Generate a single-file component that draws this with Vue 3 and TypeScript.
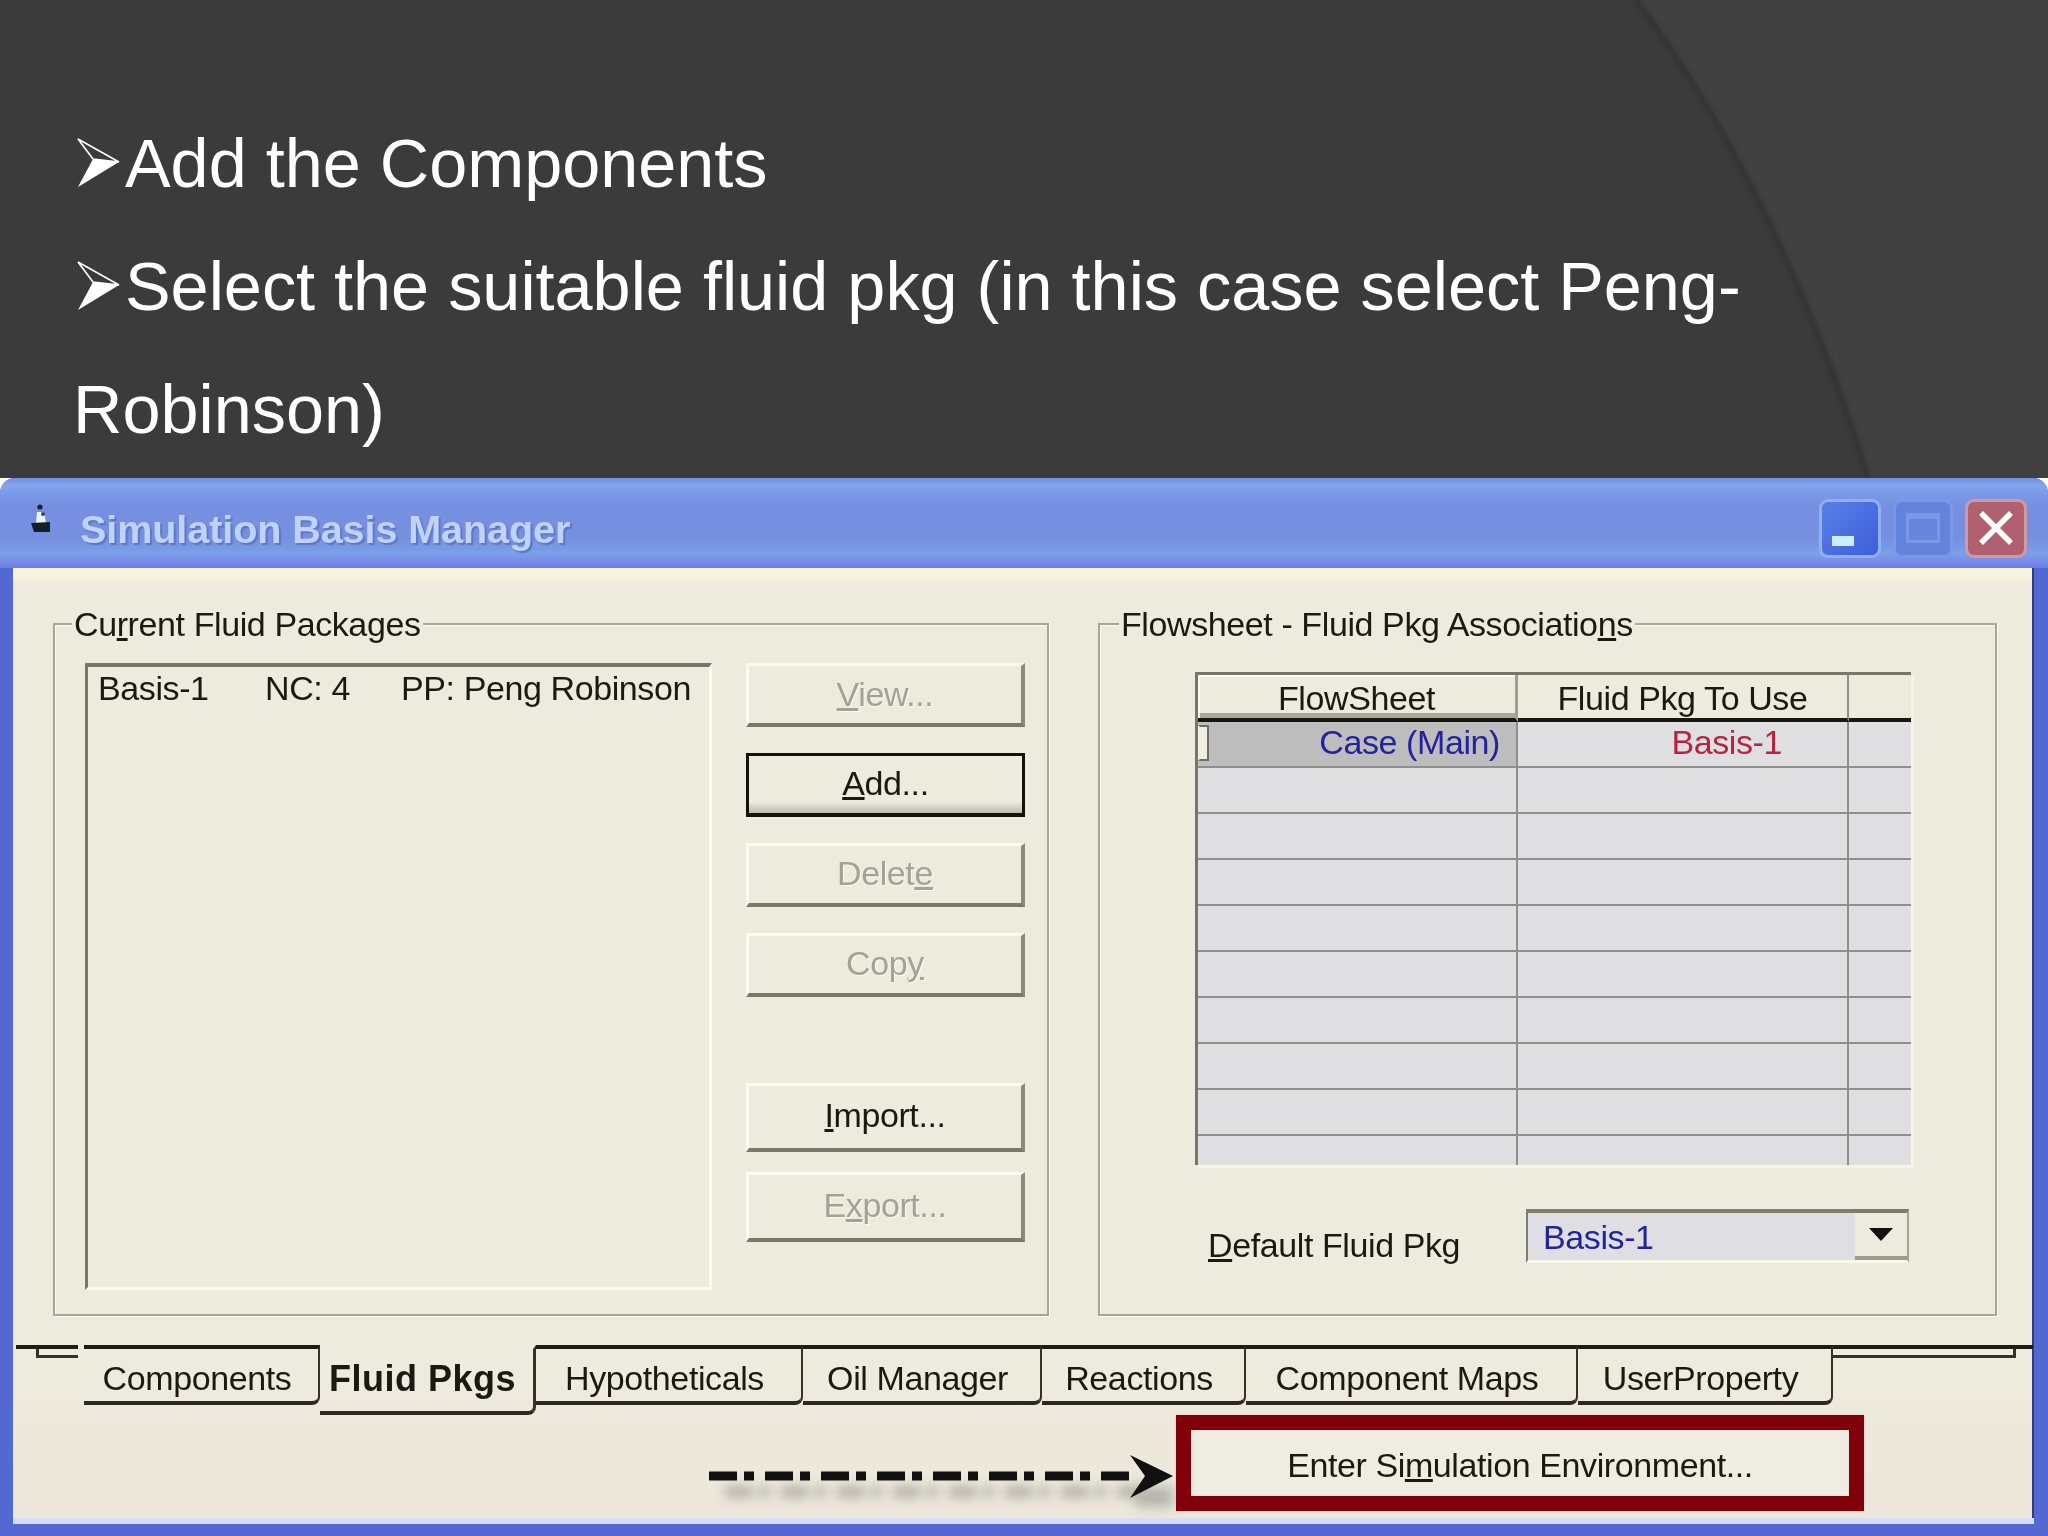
<script setup lang="ts">
interface Tab { label: string; width: number; selected?: boolean }
const tabs: Tab[] = [
  { label: 'Components', width: 236 },
  { label: 'Fluid Pkgs', width: 216, selected: true },
  { label: 'Hypotheticals', width: 267 },
  { label: 'Oil Manager', width: 239 },
  { label: 'Reactions', width: 204 },
  { label: 'Component Maps', width: 332 },
  { label: 'UserProperty', width: 255 },
]
const emptyRows = [1, 2, 3, 4, 5, 6, 7, 8, 9]
</script>

<template>
  <div class="slide">
    <svg class="swoosh" viewBox="0 0 2048 478" width="2048" height="478" aria-hidden="true">
      <path d="M1638 0 Q1780 190 1870 478 L2048 478 L2048 0 Z" fill="#414141" />
      <path class="swoosh-edge" d="M1636 0 Q1778 190 1868 478" />
    </svg>

    <div class="bullets">
      <p>
        <svg class="bullet" viewBox="0 0 52 52" aria-hidden="true">
          <path d="M5 3 L46 26 L20 23 Z" fill="none" stroke="#fff" stroke-width="1.6" />
          <path d="M46 26 L5 51 L20 23 Z" fill="#fff" />
        </svg>Add the Components
      </p>
      <p>
        <svg class="bullet" viewBox="0 0 52 52" aria-hidden="true">
          <path d="M5 3 L46 26 L20 23 Z" fill="none" stroke="#fff" stroke-width="1.6" />
          <path d="M46 26 L5 51 L20 23 Z" fill="#fff" />
        </svg>Select the suitable fluid pkg (in this case select Peng-<br />Robinson)
      </p>
    </div>

    <div class="window">
      <div class="frame">
        <header class="titlebar">
          <svg class="app-icon" viewBox="0 0 20 30" aria-hidden="true">
            <circle cx="9" cy="4" r="2.6" fill="#1d2430" />
            <path d="M6 9 L13 9 L15 20 L5 20 Z" fill="#eef1f8" />
            <circle cx="12" cy="11" r="2" fill="#39414f" />
            <path d="M0 20 L19 19 L19 29 L3 29 Z" fill="#12202a" />
          </svg>
          <span class="title">Simulation Basis Manager</span>
          <div class="controls">
            <div class="ctl ctl-min"><span class="min-glyph"></span></div>
            <div class="ctl ctl-max"><span class="max-glyph"></span></div>
            <div class="ctl ctl-close">
              <svg viewBox="0 0 40 40" width="40" height="40" aria-hidden="true">
                <path d="M5 5 L35 35 M35 5 L5 35" stroke="#fff" stroke-width="5.5" />
              </svg>
            </div>
          </div>
        </header>

        <div class="client">
          <div class="groups">
            <section class="group group-a">
              <span class="legend">Cu<u>r</u>rent Fluid Packages</span>
              <div class="listbox">
                <div class="list-row">
                  <span>Basis-1</span><span>NC: 4</span><span>PP: Peng Robinson</span>
                </div>
              </div>
              <div class="btns">
                <button class="btn off"><u>V</u>iew...</button>
                <button class="btn default"><u>A</u>dd...</button>
                <button class="btn off">Delet<u>e</u></button>
                <button class="btn off">Cop<u>y</u></button>
                <button class="btn tall lower"><u>I</u>mport...</button>
                <button class="btn off tall">E<u>x</u>port...</button>
              </div>
            </section>

            <section class="group group-b">
              <span class="legend legend-b">Flowsheet - Fluid Pkg Associatio<u>n</u>s</span>
              <div class="grid">
                <div class="gcell ghead ghead-raised">FlowSheet</div>
                <div class="gcell ghead">Fluid Pkg To Use</div>
                <div class="gcell ghead gend"></div>

                <div class="gcell first"><span class="marker"></span><span class="blue">Case (Main)</span></div>
                <div class="gcell second"><span class="red">Basis-1</span></div>
                <div class="gcell gend"></div>

                <template v-for="r in emptyRows" :key="r">
                  <div class="gcell" :class="{ last: r === 9 }"></div>
                  <div class="gcell" :class="{ last: r === 9 }"></div>
                  <div class="gcell gend" :class="{ last: r === 9 }"></div>
                </template>
              </div>
              <div class="default-row">
                <label class="default-label"><u>D</u>efault Fluid Pkg</label>
                <div class="combo">
                  <span class="combo-text">Basis-1</span>
                  <span class="combo-btn"><i class="tri"></i></span>
                </div>
              </div>
            </section>
          </div>

          <nav class="tabs">
            <div class="tab-fill tab-fill-left"></div>
            <div
              v-for="t in tabs"
              :key="t.label"
              class="tab"
              :class="{ selected: t.selected }"
              :style="{ width: t.width + 'px' }"
            >{{ t.label }}</div>
            <div class="tab-fill tab-fill-right"></div>
          </nav>

          <div class="footer">
            <svg class="arrow" viewBox="0 0 465 97" width="465" height="97" aria-hidden="true">
              <path class="arrow-shadow" d="M14 77 H440" />
              <path class="head-shadow" d="M425 72 L462 72 L462 92 L425 92 Z" />
              <path class="arrow-line" d="M-2 61 H420" />
              <path d="M419 40 L462 61 L419 83 L434 61 Z" fill="#111" />
            </svg>
            <div class="enter-box">
              <div class="enter">Enter Si<u>m</u>ulation Environment...</div>
            </div>
          </div>
        </div>
      </div>
    </div>
  </div>
</template>

<style>
html, body { margin: 0; background: #3b3b3b; }
</style>

<style scoped>
.slide {
  position: relative;
  width: 2048px;
  height: 1536px;
  overflow: hidden;
  display: flex;
  flex-direction: column;
  background: #3b3b3b;
  font-family: "Liberation Sans", Arial, sans-serif;
}
.swoosh { position: absolute; left: 0; top: 0; }
.swoosh-edge {
  fill: none;
  stroke: #343434;
  stroke-width: 6;
  filter: blur(2px);
}

.bullets {
  position: relative;
  height: 478px;
  box-sizing: border-box;
  padding: 102px 0 0 73px;
  color: #fff;
  font-size: 68.4px;
  line-height: 123px;
}
.bullets p { margin: 0; white-space: nowrap; }
.bullet {
  display: inline-block;
  width: 52px;
  height: 52px;
  vertical-align: -1px;
}

.window {
  flex: 1;
  background: #fff;
  display: flex;
  min-height: 0;
}
.frame {
  flex: 1;
  display: flex;
  flex-direction: column;
  border-radius: 15px 15px 0 0;
  overflow: hidden;
  background: #5468d2;
  padding: 0 14px 12px 13px;
  filter: blur(0.6px);
}

.titlebar {
  height: 90px;
  margin: 0 -14px 0 -13px;
  display: flex;
  align-items: center;
  background: linear-gradient(#7590e0 0, #84a6ee 9%, #7b99e8 16%, #768fe0 32%, #7690e0 68%, #7aa0e8 84%, #7a8ae8 93%, #6a80e4 100%);
}
.app-icon { width: 20px; height: 30px; margin: -10px 0 0 31px; }
.title {
  margin-left: 29px;
  margin-top: 12px;
  font-size: 39.6px;
  font-weight: 700;
  color: #c0d2f6;
  text-shadow: 2px 2px 1px #5d76c8;
  letter-spacing: -0.1px;
}
.controls {
  margin-left: auto;
  margin-right: 21px;
  display: flex;
  gap: 12px;
  margin-top: 10px;
}
.ctl {
  width: 62px;
  height: 59px;
  box-sizing: border-box;
  border: 3px solid #8fb0f5;
  border-radius: 9px;
  position: relative;
  display: flex;
  align-items: center;
  justify-content: center;
}
.ctl-min { background: linear-gradient(135deg, #5b7fe6, #3c5fd8); }
.ctl-max { background: #6483dc; border-color: #7a98e8; width: 60px; }
.ctl-close { background: #b0606e; border-color: #cf9aa8; }
.min-glyph {
  position: absolute;
  left: 10px;
  bottom: 9px;
  width: 22px;
  height: 10px;
  background: #c8f0ff;
}
.max-glyph {
  width: 34px;
  height: 30px;
  box-sizing: border-box;
  border: 3px solid #7a98e8;
  border-top-width: 6px;
  background: #6585de;
}

.client {
  flex: 1;
  display: flex;
  flex-direction: column;
  color: #1a1a12;
  font-size: 34px;
  line-height: 40px;
  letter-spacing: -0.4px;
  background: linear-gradient(#f6f4df 0, #f6f4df 10px, #edeade 14px, #edeade 85%, #ece7da 100%);
  border-bottom: 6px solid #d8dcfa;
  box-shadow: inset -2px 0 0 #2e3c88;
}

.groups {
  margin: 55px 0 0 40px;
  display: flex;
  gap: 49px;
}
.group {
  position: relative;
  box-sizing: border-box;
  height: 693px;
  border: 2px solid #a6a596;
  box-shadow: inset 1px 1px 0 #fbfaf0, 1px 1px 0 #fbfaf0;
}
.group-a {
  width: 996px;
  display: flex;
  padding: 38px 0 0 30px;
  gap: 34px;
}
.group-b {
  width: 899px;
  padding: 47px 0 0 95px;
}
.legend {
  position: absolute;
  left: 17px;
  top: -21px;
  padding: 0 2px;
  background: #edeade;
  white-space: nowrap;
}
.legend-b { left: 19px; }

.listbox {
  box-sizing: border-box;
  width: 627px;
  height: 627px;
  border-top: 4px solid #77766a;
  border-left: 3px solid #77766a;
  border-right: 3px solid #fbfaee;
  border-bottom: 3px solid #fbfaee;
  padding: 1px 0 0 10px;
}
.list-row {
  display: grid;
  grid-template-columns: 167px 136px auto;
  white-space: nowrap;
}

.btns { display: flex; flex-direction: column; width: 279px; gap: 26px; }
.btn {
  box-sizing: border-box;
  height: 64px;
  padding: 0 0 4px;
  margin: 0;
  font: inherit;
  letter-spacing: inherit;
  line-height: 40px;
  color: #1a1a12;
  background: #edeade;
  border: 0;
  border-top: 3px solid #fbfaf0;
  border-left: 3px solid #fbfaf0;
  border-right: 4px solid #8b8a7a;
  border-bottom: 4px solid #7a7868;
}
.btn:first-child { padding-bottom: 1px; }
.btn.off { color: #a3a296; text-shadow: 1px 1px 0 #fbfaf0; }
.btn.default {
  border: 3px solid #12120c;
  border-bottom-width: 4px;
  background: linear-gradient(#edeade 80%, #bdbbae 100%);
}
.btn.tall { height: 69px; }
.btn.lower { margin-top: 60px; }
.btn.off.tall { height: 70px; margin-top: -6px; }

.grid {
  box-sizing: border-box;
  width: 716px;
  height: 493px;
  display: grid;
  grid-template-columns: 320px 331px 62px;
  grid-template-rows: 47px repeat(9, 46px) 29px;
  border-top: 3px solid #77766a;
  border-left: 3px solid #77766a;
  box-shadow: 3px 3px 0 #f6f5e8;
  background: #dfdfe1;
  overflow: hidden;
}
.gcell {
  box-sizing: border-box;
  position: relative;
  background: #dfdfe1;
  border-right: 2px solid #8e8e8a;
  border-bottom: 2px solid #8e8e8a;
}
.gcell.gend { border-right: 0; }
.gcell.last { border-bottom: 0; }
.ghead {
  background: #edeade;
  border-bottom: 4px solid #17170f;
  text-align: center;
  padding-top: 3px;
  white-space: nowrap;
}
.ghead-raised {
  border-right: 3px solid #a09f90;
  box-shadow: inset 2px 2px 0 #fbfaf0, inset 0 -5px 0 #a9a89a;
}
.first {
  background: #bdbdbd;
  text-align: right;
  padding-right: 16px;
  white-space: nowrap;
}
.second {
  text-align: right;
  padding-right: 65px;
  white-space: nowrap;
}
.blue { color: #23239c; }
.red { color: #b8243e; }
.marker {
  position: absolute;
  left: 0;
  top: 3px;
  width: 11px;
  height: 36px;
  box-sizing: border-box;
  background: #f0eee2;
  border: 2px solid #6e6e64;
  border-left-color: #f0eee2;
}

.default-row {
  display: flex;
  margin-top: 44px;
  margin-left: 13px;
}
.default-label { width: 318px; padding-top: 16px; white-space: nowrap; }
.combo {
  box-sizing: border-box;
  width: 383px;
  height: 54px;
  display: flex;
  justify-content: space-between;
  background: #dfdfe3;
  border-top: 4px solid #7d7d6c;
  border-left: 2px solid #7d7d6c;
  border-right: 2px solid #a5a595;
  border-bottom: 3px solid #f8f7ea;
}
.combo-text { color: #23239c; padding: 0 0 0 15px; margin-top: 4px; }
.combo-btn {
  width: 52px;
  box-sizing: border-box;
  background: #edeade;
  border-bottom: 4px solid #9c9b8c;
  display: flex;
  align-items: center;
  justify-content: center;
}
.tri {
  width: 0;
  height: 0;
  border-left: 12px solid transparent;
  border-right: 12px solid transparent;
  border-top: 13px solid #111;
}

.tabs {
  margin: 29px 0 0 3px;
  height: 70px;
  display: flex;
  align-items: flex-start;
}
.tab-fill {
  position: relative;
  box-sizing: border-box;
  height: 4px;
  background: #1d1d15;
}
.tab-fill-left { width: 62px; margin-right: 6px; }
.tab-fill-left::after {
  content: "";
  position: absolute;
  left: 20px;
  top: 4px;
  width: 42px;
  height: 9px;
  box-sizing: border-box;
  border-left: 3px solid #33332a;
  border-bottom: 3px solid #33332a;
}
.tab-fill-right { width: 200px; }
.tab-fill-right::after {
  content: "";
  position: absolute;
  left: 0;
  top: 4px;
  width: 183px;
  height: 9px;
  box-sizing: border-box;
  border-right: 3px solid #33332a;
  border-bottom: 3px solid #33332a;
}
.tab {
  box-sizing: border-box;
  height: 60px;
  padding: 9px 8px 0 0;
  text-align: center;
  white-space: nowrap;
  border-top: 4px solid #1d1d15;
  border-right: 2px solid #33332a;
  border-bottom: 4px solid #2a2a20;
  border-bottom-right-radius: 8px;
}
.tab:first-of-type { border-right-color: transparent; }
.tab.selected {
  height: 70px;
  padding-top: 10px;
  font-size: 36px;
  font-weight: 700;
  letter-spacing: 0.5px;
  border-top-color: transparent;
  border-right-width: 3px;
}

.footer {
  display: flex;
  margin-left: 698px;
  height: 103px;
  align-items: flex-start;
}
.arrow { flex: none; overflow: visible; }
.arrow-line {
  fill: none;
  stroke: #111;
  stroke-width: 9;
  stroke-dasharray: 28 7 10 11;
}
.arrow-shadow {
  fill: none;
  stroke: #a9a9a2;
  stroke-width: 10;
  stroke-dasharray: 28 7 10 11;
  filter: blur(6px);
}
.head-shadow {
  fill: #b4b4ac;
  filter: blur(6px);
}
.enter-box {
  box-sizing: border-box;
  width: 688px;
  height: 96px;
  border: 15px solid #80000a;
  background: #efece2;
  box-shadow: 0 0 2px #e8b8b0, inset 0 0 2px #e9c8c0;
}
.enter {
  text-align: center;
  line-height: 40px;
  padding-top: 15px;
  white-space: nowrap;
}
</style>
